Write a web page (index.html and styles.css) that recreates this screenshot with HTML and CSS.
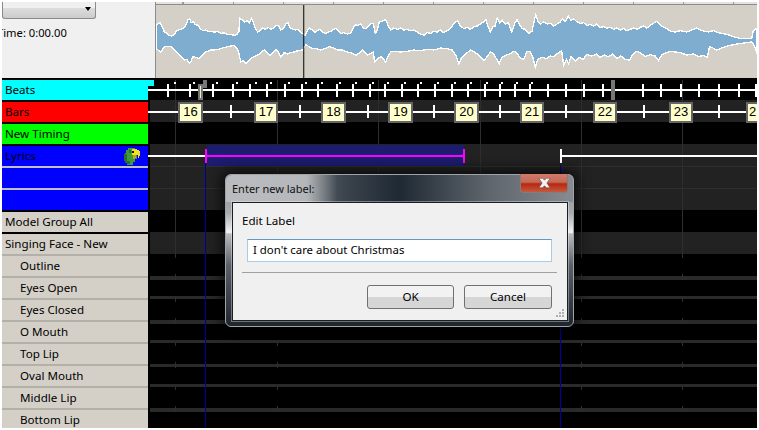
FILE: index.html
```html
<!DOCTYPE html>
<html lang="en">
<head>
    <meta charset="UTF-8">
    <title>Sequencer - Enter new label</title>
    <link rel="stylesheet" href="styles.css">
</head>
<body>
<div class="app">
    <div class="top">
        <div class="controls">
            <div class="dropdown"><span class="arrow"></span></div>
            <div class="time">Time: 0:00.00</div>
        </div>
        <div class="wave">
            <div class="ruler"></div>
            <svg class="wave-svg" viewBox="465 15 1806 219" preserveAspectRatio="none" shape-rendering="crispEdges">
                <polygon class="wave-shape" points="465,75 472,70 478,68 484,82 490,95 498,100 505,106 512,108 520,104 526,92 532,90 540,88 548,85 556,72 561,60 566,57 571,68 577,65 583,74 590,75 598,86 606,92 614,90 622,94 632,94 640,96 650,95 660,100 670,99 680,104 690,103 700,106 708,104 714,95 717,55 724,60 731,66 738,62 746,68 752,56 757,66 764,88 771,96 778,92 786,84 794,88 802,82 810,88 818,84 826,76 833,78 840,90 848,86 855,72 862,68 868,84 876,88 884,90 892,88 900,98 908,102 914,106 920,92 926,84 934,90 942,98 950,92 958,88 966,96 974,100 982,96 990,94 998,88 1006,86 1014,94 1022,100 1030,98 1040,102 1050,100 1058,84 1064,74 1072,76 1080,72 1088,84 1096,86 1104,78 1112,70 1118,72 1124,100 1130,90 1136,66 1140,65 1148,62 1155,58 1162,76 1170,90 1180,84 1190,88 1200,84 1210,90 1220,88 1230,92 1240,90 1250,96 1260,102 1270,106 1280,98 1290,100 1300,94 1310,96 1320,90 1328,98 1335,94 1343,90 1350,84 1358,74 1365,66 1372,62 1380,78 1390,86 1400,82 1410,88 1420,80 1430,78 1440,72 1448,66 1456,58 1462,78 1470,96 1478,80 1484,78 1490,54 1498,68 1505,60 1515,72 1524,68 1534,96 1542,72 1550,58 1558,74 1566,86 1575,88 1585,100 1595,94 1602,60 1606,44 1613,66 1620,72 1630,66 1640,72 1650,70 1660,78 1670,72 1680,66 1686,56 1694,66 1704,48 1712,62 1720,56 1730,66 1740,70 1750,68 1760,76 1770,74 1780,78 1790,72 1800,82 1810,80 1820,84 1830,82 1840,88 1850,84 1860,90 1870,86 1880,92 1890,88 1900,84 1910,88 1920,82 1930,78 1940,84 1950,76 1960,70 1970,64 1978,72 1990,82 2000,86 2012,94 2025,96 2040,92 2060,96 2075,90 2090,84 2105,92 2125,96 2140,92 2155,98 2175,102 2190,106 2205,112 2220,115 2240,116 2255,115 2260,92 2271,85 2271,160 2262,135 2255,126 2240,128 2225,130 2205,133 2190,136 2170,142 2150,150 2135,142 2128,140 2122,172 2110,166 2095,170 2080,162 2060,165 2040,158 2025,156 2010,154 1995,160 1985,164 1975,182 1965,168 1950,164 1935,170 1920,158 1910,154 1900,160 1888,180 1875,178 1862,168 1850,176 1838,162 1825,170 1812,165 1800,172 1788,162 1775,168 1760,164 1748,178 1735,172 1725,184 1712,170 1705,192 1698,178 1690,196 1684,152 1672,160 1660,170 1650,168 1638,176 1625,172 1612,178 1605,202 1597,170 1590,156 1580,154 1570,178 1560,174 1548,158 1540,154 1528,162 1515,166 1505,172 1496,192 1488,176 1478,160 1470,156 1460,170 1450,182 1440,170 1428,160 1410,150 1400,158 1390,166 1382,176 1375,192 1366,166 1355,150 1340,146 1320,144 1300,150 1285,148 1270,150 1255,152 1240,150 1220,154 1200,156 1180,154 1170,156 1162,170 1155,186 1148,176 1140,170 1132,176 1122,186 1118,156 1110,160 1100,166 1092,156 1085,150 1075,160 1065,166 1052,158 1040,156 1025,150 1010,150 998,144 985,140 972,146 960,150 948,146 935,146 925,140 915,134 906,150 892,152 880,156 868,158 860,162 850,158 840,172 832,156 825,148 816,158 808,166 798,156 790,150 780,158 770,166 760,170 750,176 742,184 735,190 727,182 720,186 714,160 710,148 700,136 690,138 680,140 665,144 652,148 640,150 628,150 615,156 605,166 595,176 585,172 575,170 570,186 565,190 558,178 550,180 540,170 530,160 520,148 510,140 500,140 490,140 484,150 478,156 471,150 465,145"/>
                <line class="wave-cursor" x1="909" y1="15" x2="909" y2="234"/>
            </svg>
        </div>
    </div>

    <div class="main">
        <div class="rows">
            <div class="row beats">Beats</div>
            <div class="row bars">Bars</div>
            <div class="row timing">New Timing</div>
            <div class="lyrics">
                <div class="row lyric">Lyrics
                    <svg class="parrot" viewBox="0 0 16 17" shape-rendering="crispEdges">
                        <path fill="#3f9a3a" d="M4 0h7v2h2v9h-2v3H9v3H3v-2H1V5h1V2h2z"/>
                        <path fill="#2a6e2c" d="M0 6h3v7h3v3H3v-1H1v-2H0zM5 2h2v3H5z"/>
                        <path fill="#f3e01e" d="M8 1h5v1h2v1h1v5h-1v2h-1V7h-3v2H9V7H8z"/>
                        <path fill="#b9a814" d="M9 7h3v3h-1v1H9z"/>
                        <path fill="#111" d="M8 3h2v2H8z"/>
                    </svg>
                </div>
                <div class="row lyric sub"></div>
                <div class="row lyric sub"></div>
            </div>
            <div class="row model">Model Group All</div>
            <div class="faces">
                <div class="row model">Singing Face - New</div>
                <div class="row model part">Outline</div>
                <div class="row model part">Eyes Open</div>
                <div class="row model part">Eyes Closed</div>
                <div class="row model part">O Mouth</div>
                <div class="row model part">Top Lip</div>
                <div class="row model part">Oval Mouth</div>
                <div class="row model part">Middle Lip</div>
                <div class="row model part">Bottom Lip</div>
            </div>
        </div>

        <svg class="timeline" viewBox="148 78 609 350" shape-rendering="crispEdges">
            <!-- row bands -->
            <path class="band" d="M150 100h607v22H150zM150 144h607v66H150zM150 232h607v22H150z"/>
            <path class="band-thin" d="M150 276h607v4H150zM150 296h607v3H150zM150 320h607v4H150zM150 340h607v3H150zM150 364h607v3H150zM150 384h607v3H150zM150 408h607v4H150z"/>
            <path class="band-line" d="M150 166h607M150 188h607"/>
            <!-- grid -->
            <path class="grid" d="M175.500 80v176M277.500 80v176M378.500 80v176M480.500 80v176M581.500 80v176M682.500 80v176"/>
            <path class="grid" d="M175.500 255v3M175.500 274v6M175.500 296v6M175.500 318v6M175.500 343v3M175.500 362v6M175.500 387v3M175.500 406v6M277.500 255v3M277.500 274v6M277.500 296v6M277.500 318v6M277.500 343v3M277.500 362v6M277.500 387v3M277.500 406v6M581.500 255v3M581.500 274v6M581.500 296v6M581.500 318v6M581.500 343v3M581.500 362v6M581.500 387v3M581.500 406v6M682.500 255v3M682.500 274v6M682.500 296v6M682.500 318v6M682.500 343v3M682.500 362v6M682.500 387v3M682.500 406v6"/>
            <!-- selection -->
            <rect class="selection" x="207" y="145" width="257" height="21"/>
            <path class="marker" d="M205.500 163v265M560.500 165v263"/>
            <!-- beats -->
            <path class="white-line" d="M148 90h609"/>
            <path class="white-line" d="M168 84v13M190 84v13M213 84v13M233 84v13M250 84v13M267 84v13M285 84v13M302 84v13M318 84v13M337 84v13M353 84v13M370 84v13M385 84v13M402 84v13M418 84v13M435 84v13M452 84v13M468 84v13M485 84v13M500 84v13M515 84v13M530 84v13M548 84v13M566 84v13M584 84v13M603 84v13M643 84v13M661 84v13M681 84v13M699 84v13M719 84v13M739 84v13M756 84v13"/>
            <path class="white-dot" d="M174 83h2M193 83h2M216 83h2M236 83h2M255 83h2M270 83h2M288 83h2M305 83h2M321 83h2M339 83h2M355 83h2M372 83h2M387 83h2M404 83h2M420 83h2M437 83h2M454 83h2M470 83h2M486 83h2M501 83h2M516 83h2M531 83h2"/>
            <rect class="handle-small" x="204" y="81" width="2" height="6"/>
            <rect class="handle" x="199" y="85" width="3" height="14"/>
            <rect class="handle-grey" x="612" y="81" width="2" height="18"/>
            <path class="white-line" d="M622 90h3"/>
            <!-- bars -->
            <path class="white-line" d="M148 112h609"/>
            <path class="white-line" d="M231 105v13M300 105v13M368 105v13M434 105v13M500 105v13M566 105v13M644 105v13M719 105v13"/>
            <g class="bar-labels">
                <rect x="179" y="103" width="23" height="19"/><text x="190.500" y="116">16</text>
                <rect x="255" y="103" width="22" height="19"/><text x="266" y="116">17</text>
                <rect x="322" y="103" width="23" height="19"/><text x="333.500" y="116">18</text>
                <rect x="389" y="103" width="23" height="19"/><text x="400.500" y="116">19</text>
                <rect x="455" y="103" width="23" height="19"/><text x="466.500" y="116">20</text>
                <rect x="521" y="103" width="22" height="19"/><text x="532" y="116">21</text>
                <rect x="594" y="103" width="22" height="19"/><text x="605" y="116">22</text>
                <rect x="670" y="103" width="22" height="19"/><text x="681" y="116">23</text>
                <rect x="747" y="103" width="22" height="19"/><text x="752.500" y="116">2</text>
            </g>
            <!-- lyrics -->
            <path class="white-line" d="M148 156h58M561 156h196"/>
            <path class="magenta-line" d="M206 156h258M206 149v14M464 149v14"/>
            <path class="white-line" d="M561 149v14"/>
        </svg>

        <div class="dialog">
            <div class="dialog-title">Enter new label:</div>
            <div class="dialog-close">
                <svg class="close-x" viewBox="0 0 14 10"><path d="M1 0h4l2 2 2-2h4l-3.500 5L13 10H9L7 8l-2 2H1l3.500-5z"/></svg>
            </div>
            <div class="dialog-body">
                <div class="dialog-label">Edit Label</div>
                <div class="dialog-input">I don't care about Christmas</div>
                <div class="dialog-sep"></div>
                <div class="dialog-buttons">
                    <div class="btn">OK</div>
                    <div class="btn">Cancel</div>
                </div>
                <svg class="grip" viewBox="0 0 8 8" shape-rendering="crispEdges">
                    <path d="M6 0h2v2H6zM3 3h2v2H3zM6 3h2v2H6zM0 6h2v2H0zM3 6h2v2H3zM6 6h2v2H6z"/>
                </svg>
            </div>
        </div>
    </div>
</div>
</body>
</html>
```

FILE: styles.css
```css
html, body {
    margin: 0;
    background: #fff;
    overflow: hidden;
}
body {
    font-family: "Noto Sans", "Open Sans", sans-serif;
    font-size: 11.6px;
    color: #000;
}
.app {
    width: 755px;
    height: 426px;
    margin: 2px 2px 0;
    display: flex;
    flex-direction: column;
}

/* top strip */
.top {
    display: flex;
    height: 76px;
    flex: none;
}
.controls {
    width: 153px;
    flex: none;
    background: #f0f0f0;
    overflow: hidden;
}
.dropdown {
    width: 92px;
    height: 16px;
    border: 1px solid #8a8a8a;
    border-top: none;
    border-radius: 0 0 3px 3px;
    background: linear-gradient(#f0f0f0 35%, #dcdcdc 40%, #cccccc);
    position: relative;
}
.arrow {
    position: absolute;
    right: 4px;
    top: 5px;
    border: 3.5px solid transparent;
    border-top: 4px solid #000;
    border-bottom: none;
}
.time {
    margin: 5px 0 0 -5px;
    line-height: 17px;
    font-size: 11.2px;
}
.wave {
    flex: 1;
    display: flex;
    flex-direction: column;
    background: #d4d0c8;
    border-left: 1px solid #8c8c8c;
    min-width: 0;
}
.ruler {
    height: 3px;
    flex: none;
    border-bottom: 1px solid #8c8c8c;
    box-sizing: border-box;
    background: repeating-linear-gradient(90deg, #9a9a9a 0 1px, #e4e2dc 1px 50px) 27px 0;
}
.wave-svg {
    flex: 1;
    width: 100%;
    min-height: 0;
    display: block;
}
.wave-shape {
    fill: #7fadcf;
    stroke: #fff;
    stroke-width: 4;
}
.wave-cursor {
    stroke: #000;
    stroke-width: 3;
}

/* track list + timeline */
.main {
    flex: 1;
    display: flex;
    position: relative;
    background: #000;
    min-height: 0;
}
.rows {
    width: 146px;
    flex: none;
    padding-top: 2px;
    display: flex;
    flex-direction: column;
    gap: 2px;
}
.row {
    height: 20px;
    line-height: 20px;
    padding-left: 3px;
    flex: none;
    position: relative;
}
.beats { background: #0ff; }
.beats::after {
    content: "";
    position: absolute;
    left: 100%;
    top: 0;
    width: 6px;
    height: 6px;
    background: #0ff;
    z-index: 1;
}
.bars { background: #f00; }
.timing { background: #0f0; }
.lyric { background: #00f; }
.lyrics {
    display: flex;
    flex-direction: column;
}
.lyric.sub { border-top: 2px solid #c0c0c0; }
.model { background: #d4d0c8; }
.faces {
    display: flex;
    flex-direction: column;
}
.part {
    border-top: 2px solid #b3b0a9;
    padding-left: 18px;
}
.parrot {
    position: absolute;
    right: 8px;
    top: 2px;
    width: 16px;
    height: 17px;
}
.timeline {
    flex: 1;
    min-width: 0;
    height: 350px;
    display: block;
}
.band { fill: #222; }
.band-thin { fill: #2a2a2a; }
.band-line { stroke: #2e2e2e; stroke-width: 1; fill: none; }
.grid { stroke: #2e2e2e; stroke-width: 1; fill: none; }
.selection { fill: #1c1c70; }
.marker { stroke: #0000a0; stroke-width: 1; fill: none; }
.white-line { stroke: #fff; stroke-width: 2; fill: none; }
.white-dot { stroke: #fff; stroke-width: 2; fill: none; }
.magenta-line { stroke: #f0f; stroke-width: 2; fill: none; }
.handle { fill: #f0ecc4; stroke: #777; stroke-width: 2; }
.handle-small { fill: #ddd; stroke: #777; stroke-width: 2; }
.handle-grey { fill: #fff; stroke: #777; stroke-width: 2; }
.bar-labels rect {
    fill: #ffc;
    stroke: #666;
    stroke-width: 2;
}
.bar-labels text {
    font-family: "Liberation Sans", sans-serif;
    font-size: 13px;
    text-anchor: middle;
    fill: #000;
}

/* label dialog */
.dialog {
    position: absolute;
    left: 223px;
    top: 96px;
    width: 349px;
    height: 153px;
    box-sizing: border-box;
    padding: 27px 5px 5px 6px;
    border-radius: 6px;
    border: 1px solid #a0a3a8;
    background:
        linear-gradient(90deg, #8b8f95 0, #8b9096 6%, #3a434c 35%, #1f2933 50%, #5d646c 75%, #878b92 100%) top / 100% 27px no-repeat,
        linear-gradient(#8b8f95 0, #a6a9ad 25%, #f2f2f2 38%, #b9bbbe 39%, #5a6068 60%, #1e252c 100%);
    box-shadow: 0 0 14px 3px rgba(0, 0, 0, 0.75);
}
.dialog-title {
    position: absolute;
    left: 0;
    top: 0;
    padding: 0 22px 0 6px;
    height: 27px;
    line-height: 27px;
    font-size: 11px;
    color: #111;
    border-radius: 6px 0 0 0;
    background: linear-gradient(90deg, rgba(190, 192, 195, 0.9) 72%, rgba(190, 192, 195, 0));
}
.dialog-close {
    position: absolute;
    right: 5px;
    top: -1px;
    width: 48px;
    height: 19px;
    box-sizing: border-box;
    border: 1px solid #8a7a78;
    border-top: none;
    border-radius: 0 0 4px 4px;
    background: linear-gradient(#d07a68, #c56a58 45%, #b8280f 55%, #c45a40);
    display: flex;
    align-items: center;
    justify-content: center;
}
.close-x {
    width: 13px;
    height: 10px;
}
.close-x path {
    fill: #f4f4f4;
    stroke: #4a3a3a;
    stroke-width: 0.5;
}
.dialog-body {
    height: 119px;
    box-sizing: border-box;
    background: #f0f0f0;
    border: 1px solid #1b1f24;
    box-shadow: 0 0 0 1px rgba(255, 255, 255, 0.35);
    padding: 9px 10px 0 9px;
    position: relative;
    display: flex;
    flex-direction: column;
}
.dialog-label {
    line-height: 17px;
}
.dialog-input {
    height: 23px;
    line-height: 19px;
    font-size: 11.4px;
    box-sizing: border-box;
    margin: 10px 5px 0;
    padding-left: 5px;
    background: #fff;
    border: 1px solid #a8cbe8;
    border-top-color: #5f9bc8;
}
.dialog-sep {
    height: 1px;
    background: #a0a0a0;
    margin-top: 10px;
}
.dialog-buttons {
    display: flex;
    justify-content: flex-end;
    gap: 10px;
    margin: 12px 5px 0 0;
}
.btn {
    width: 87px;
    height: 24px;
    line-height: 22px;
    box-sizing: border-box;
    text-align: center;
    border: 1px solid #707070;
    border-radius: 3px;
    background: linear-gradient(#f2f2f2 50%, #d6d6d6 50%);
}
.btn + .btn {
    width: 88px;
}
.grip {
    position: absolute;
    right: 3px;
    bottom: 3px;
    width: 8px;
    height: 8px;
}
.grip path {
    fill: #b0b0b0;
}
```
